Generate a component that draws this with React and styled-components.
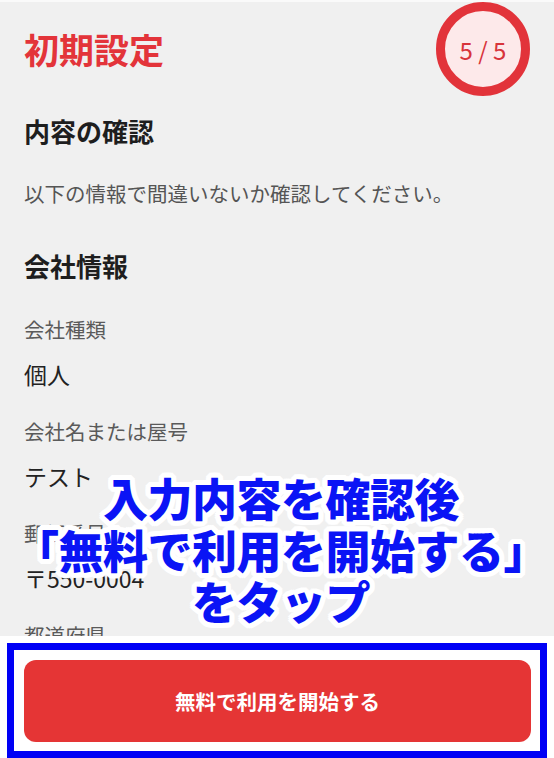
import React from 'react';
import styled, { createGlobalStyle } from 'styled-components';

const GlobalStyle = createGlobalStyle`
  html, body {
    margin: 0;
    padding: 0;
    background: #f0f0f0;
  }
  body {
    font-family: "Noto Sans CJK JP", "Noto Sans", sans-serif;
  }
  * {
    box-sizing: border-box;
  }
`;

const Screen = styled.div`
  position: relative;
  height: 100vh;
  display: flex;
  flex-direction: column;
  border-top: 2px solid #fafafa;
  overflow: hidden;
`;

const Content = styled.main`
  flex: 1;
  min-height: 0;
  overflow: hidden;
  padding: 0 24px;
`;

const Header = styled.div`
  display: flex;
  align-items: center;
  justify-content: space-between;
`;

const PageTitle = styled.h1`
  margin: 0;
  font-size: 35px;
  line-height: 44px;
  font-weight: 700;
  color: #e3343a;
`;

const StepBadge = styled.div`
  width: 94px;
  height: 94px;
  border-radius: 50%;
  border: 9px solid #e2333a;
  background: #fde9ea;
  display: flex;
  align-items: center;
  justify-content: center;
  font-size: 24px;
  color: #d8343b;
  font-weight: 400;
`;

const SectionTitle = styled.h2`
  margin: ${(p) => p.$gap}px 0 0;
  font-size: 26px;
  line-height: 36px;
  font-weight: 700;
  color: #1e1e1e;
`;

const Lead = styled.p`
  margin: 29px 0 0;
  font-size: 20.5px;
  line-height: 30px;
  color: #555;
`;

const Field = styled.div`
  margin-top: ${(p) => p.$gap}px;
`;

const Label = styled.div`
  font-size: 20.5px;
  line-height: 30px;
  color: #5a5a5a;
`;

const Value = styled.div`
  margin-top: 14px;
  font-size: 23px;
  line-height: 32px;
  color: #222;
`;

const Footer = styled.footer`
  flex: none;
  background: #fff;
  padding: 7px 7px 0;
`;

const Highlight = styled.div`
  border: 7px solid #0000f5;
  padding: 10px 9px 9px 10px;
  background: #fff;
`;

const StartButton = styled.button`
  display: flex;
  align-items: center;
  justify-content: center;
  width: 100%;
  height: 82px;
  border: none;
  border-radius: 12px;
  background: #e53535;
  color: #fff;
  font-family: inherit;
  font-size: 20.5px;
  font-weight: 700;
  cursor: pointer;
`;

const Callout = styled.div`
  position: absolute;
  top: 470px;
  left: 0;
  right: 0;
  padding-left: 8px;
  text-align: center;
  font-size: 45px;
  line-height: 51.5px;
  font-weight: 900;
  color: #0a14f5;
  letter-spacing: -0.5px;
  text-shadow:
    5px 0 0 #fff, -5px 0 0 #fff, 0 5px 0 #fff, 0 -5px 0 #fff,
    4px 3px 0 #fff, -4px 3px 0 #fff, 4px -3px 0 #fff, -4px -3px 0 #fff,
    3px 4px 0 #fff, -3px 4px 0 #fff, 3px -4px 0 #fff, -3px -4px 0 #fff,
    5px 2px 0 #fff, -5px 2px 0 #fff, 5px -2px 0 #fff, -5px -2px 0 #fff,
    2px 5px 0 #fff, -2px 5px 0 #fff, 2px -5px 0 #fff, -2px -5px 0 #fff;
  pointer-events: none;
`;

const fields = [
  { label: '会社種類', value: '個人' },
  { label: '会社名または屋号', value: 'テスト' },
  { label: '郵便番号', value: '〒550-0004' },
  { label: '都道府県', value: '大阪府' },
];

const App = () => {
  return (
    <>
      <GlobalStyle />
      <Screen>
        <Content>
          <Header>
            <PageTitle>初期設定</PageTitle>
            <StepBadge>5 / 5</StepBadge>
          </Header>
          <SectionTitle $gap={17}>内容の確認</SectionTitle>
          <Lead>以下の情報で間違いないか確認してください。</Lead>
          <SectionTitle $gap={40}>会社情報</SectionTitle>
          {fields.map((f, i) => (
            <Field key={f.label} $gap={i === 0 ? 30 : 26}>
              <Label>{f.label}</Label>
              <Value>{f.value}</Value>
            </Field>
          ))}
        </Content>
        <Footer>
          <Highlight>
            <StartButton>無料で利用を開始する</StartButton>
          </Highlight>
        </Footer>
        <Callout>
          入力内容を確認後
          <br />
          「無料で利用を開始する」
          <br />
          をタップ
        </Callout>
      </Screen>
    </>
  );
};

export default App;
